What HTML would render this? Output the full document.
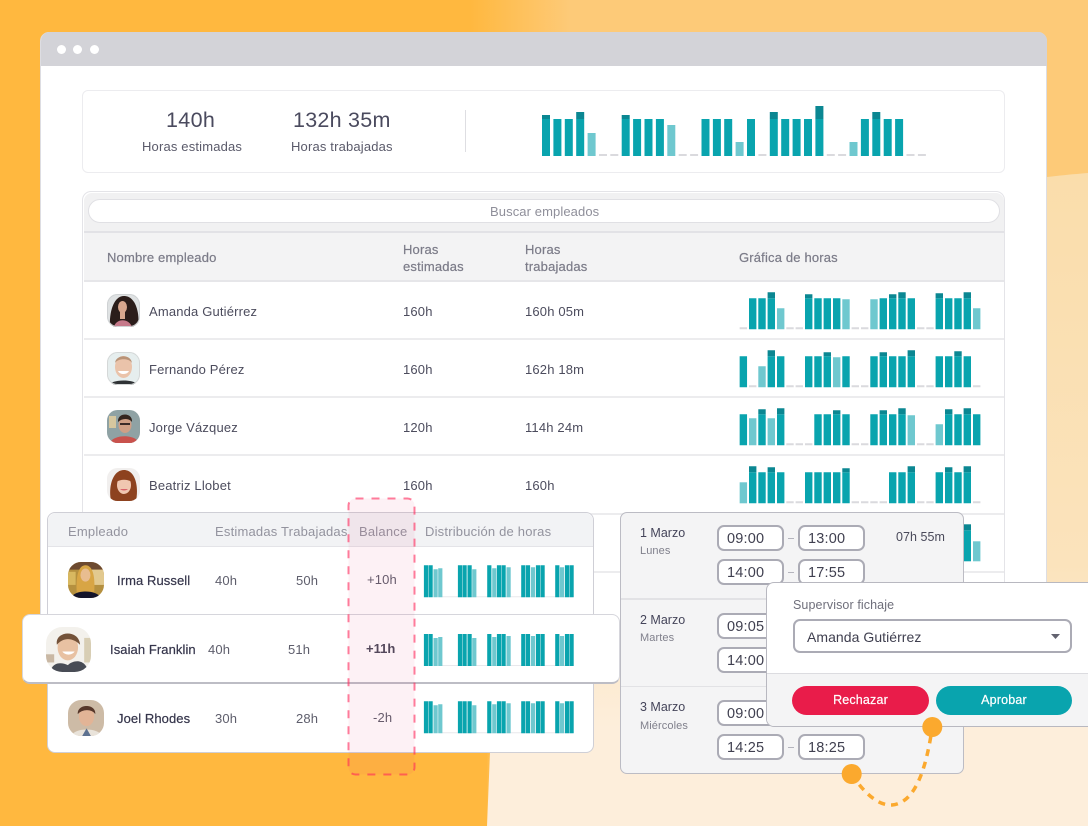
<!DOCTYPE html>
<html lang="es"><head><meta charset="utf-8"><title>Horas</title>
<style>
html,body{margin:0;padding:0}
body{width:1088px;height:826px;overflow:hidden;position:relative;background:#FFB83F;font-family:"Liberation Sans",sans-serif;font-size:13px;letter-spacing:.17px;color:#4c4c5d}
div,span,svg{position:absolute;box-sizing:border-box}
.t{white-space:nowrap;line-height:16px}
.h{color:#7b7b88;-webkit-text-stroke:.2px #7b7b88}
.g{color:#93939e;font-size:13px;letter-spacing:.2px}
.n{color:#34344a;font-size:13px;letter-spacing:.08px;-webkit-text-stroke:.2px #34344a}
.v{color:#5e5e6c}
.i{background:#fff;border:2px solid #ababb5;border-radius:7px;width:67px;height:26px;font-size:14.5px;line-height:24px;padding-left:8px;color:#3f3f4f;letter-spacing:.2px}
.d{width:6px;height:1.6px;background:#b4b4bd;left:788px}
.a{left:0;top:0}
</style></head><body>
<div style="left:0;top:0;width:1088px;height:826px;background:linear-gradient(90deg,#FFB83F 0,#FFB83F 470px,#FDCA78 570px,#FDCA78 100%)"></div>
<svg class="a" width="1088" height="826" viewBox="0 0 1088 826">
<defs><linearGradient id="bg" x1="0" y1="0" x2="0" y2="1"><stop offset="0" stop-color="#FADDAB"/><stop offset=".6" stop-color="#FBE3BC"/><stop offset=".85" stop-color="#FDEEDB"/><stop offset="1" stop-color="#FDEEDB"/></linearGradient></defs>
<path d="M0 320H490L487 826H0Z" fill="#FFB83F"/>
<path d="M1088 173C1050 176 1000 182 900 200C700 240 520 500 490 752L487 826H1088Z" fill="url(#bg)"/>
</svg>

<!-- window -->
<div style="left:40px;top:32px;width:1007px;height:620px;background:#fff;border:1px solid #dddde2;border-radius:9px 9px 0 0"></div>
<div style="left:41px;top:32px;width:1006px;height:34px;background:#D3D3D8;border-radius:9px 9px 0 0"></div>
<div style="left:57px;top:45px;width:9px;height:9px;border-radius:50%;background:#fff"></div>
<div style="left:73px;top:45px;width:9px;height:9px;border-radius:50%;background:#fff"></div>
<div style="left:90px;top:45px;width:9px;height:9px;border-radius:50%;background:#fff"></div>

<!-- stats -->
<div style="left:82px;top:90px;width:923px;height:83px;border:1.5px solid #ececef;border-radius:6px;background:#fff"></div>
<span class="t" style="left:166px;top:108px;font-size:21.500px;line-height:24px;color:#4a4a5e;letter-spacing:.35px">140h</span>
<span class="t" style="left:293px;top:108px;font-size:21.500px;line-height:24px;color:#4a4a5e;letter-spacing:.25px">132h 35m</span>
<span class="t" style="left:142px;top:138.500px;color:#5a5a6a">Horas estimadas</span>
<span class="t" style="left:291px;top:138.500px;color:#5a5a6a">Horas trabajadas</span>
<div style="left:465px;top:110px;width:1px;height:42px;background:#dedee2"></div>

<!-- table -->
<div style="left:82px;top:191px;width:923px;height:459px;border:1.5px solid #e4e4e8;border-bottom:0;border-radius:9px 9px 0 0;background:#fff"></div>
<div style="left:83.500px;top:192.500px;width:920px;height:38.500px;background:#f1f1f2;border-radius:8px 8px 0 0"></div>
<div style="left:88px;top:199px;width:912px;height:24px;background:#fff;border:1px solid #e0e0e4;border-radius:12px"></div>
<span class="t" style="left:490px;top:204px;color:#8f8f9a;font-size:13px;letter-spacing:.1px">Buscar empleados</span>
<div style="left:83.500px;top:231px;width:920px;height:51px;background:#f3f3f4;border-top:2px solid #e2e2e6;border-bottom:2px solid #e6e6e9"></div>
<span class="t h" style="left:107px;top:249.500px">Nombre empleado</span>
<span class="t h" style="left:403px;top:241px;line-height:17px">Horas<br>estimadas</span>
<span class="t h" style="left:525px;top:241px;line-height:17px">Horas<br>trabajadas</span>
<span class="t h" style="left:739px;top:249.500px">Gráfica de horas</span>
<div style="left:83.500px;top:338px;width:920px;height:2px;background:#ececee"></div>
<div style="left:83.500px;top:396px;width:920px;height:2px;background:#ececee"></div>
<div style="left:83.500px;top:454px;width:920px;height:2px;background:#ececee"></div>
<div style="left:83.500px;top:512.500px;width:920px;height:2px;background:#ececee"></div>
<div style="left:83.500px;top:570.500px;width:920px;height:2px;background:#ececee"></div>

<span class="t" style="left:149px;top:303.500px">Amanda Gutiérrez</span><span class="t" style="left:403px;top:303.500px">160h</span><span class="t" style="left:525px;top:303.500px">160h 05m</span>
<span class="t" style="left:149px;top:361.500px">Fernando Pérez</span><span class="t" style="left:403px;top:361.500px">160h</span><span class="t" style="left:525px;top:361.500px">162h 18m</span>
<span class="t" style="left:149px;top:419.500px">Jorge Vázquez</span><span class="t" style="left:403px;top:419.500px">120h</span><span class="t" style="left:525px;top:419.500px">114h 24m</span>
<span class="t" style="left:149px;top:477.500px">Beatriz Llobet</span><span class="t" style="left:403px;top:477.500px">160h</span><span class="t" style="left:525px;top:477.500px">160h</span>

<!-- avatars table -->
<svg style="left:107px;top:294px" width="33" height="33" viewBox="0 0 33 33"><defs><clipPath id="c"><rect width="33" height="33" rx="10.500"/></clipPath></defs><g clip-path="url(#c)"><rect width="33" height="33" fill="#dfe2e3"/><path d="M3 33C2 20 6 2 17 2C29 2 33 20 31 33Z" fill="#2b1d1a"/><ellipse cx="15.500" cy="13" rx="4.500" ry="6" fill="#d8a78e"/><path d="M13 17H18V25H13Z" fill="#d8a78e"/><path d="M7 33C9 24 22 24 25 33Z" fill="#c6798a"/></g><rect x=".5" y=".5" width="32" height="32" rx="10" fill="none" stroke="#cfd2d4"/></svg>
<svg style="left:107px;top:352px" width="33" height="33" viewBox="0 0 33 33"><g clip-path="url(#c)"><rect width="33" height="33" fill="#e6eeee"/><ellipse cx="16.500" cy="15" rx="8.500" ry="11" fill="#eac3aa"/><path d="M8 11C9 2 24 2 25 11C22 6 11 6 8 11Z" fill="#b99377"/><path d="M11 19C13 23 20 23 22 19Z" fill="#fff"/><path d="M2 33C5 27 28 27 31 33Z" fill="#2f3235"/></g><rect x=".5" y=".5" width="32" height="32" rx="10" fill="none" stroke="#d5d8d8"/></svg>
<svg style="left:107px;top:410px" width="33" height="33" viewBox="0 0 33 33"><g clip-path="url(#c)"><rect width="33" height="33" fill="#8fa2a4"/><rect x="2" y="6" width="7" height="12" fill="#d6c79f"/><ellipse cx="18" cy="15" rx="6.500" ry="8" fill="#cf9f86"/><path d="M11 12C10 2 26 2 25 12C22 8 15 8 11 12Z" fill="#33251f"/><path d="M13 13H23V15H13Z" fill="#3a2a28"/><path d="M3 33C6 24 29 24 32 33Z" fill="#c9524d"/></g></svg>
<svg style="left:107px;top:468px" width="33" height="33" viewBox="0 0 33 33"><g clip-path="url(#c)"><rect width="33" height="33" fill="#f1efee"/><path d="M4 33C1 18 6 2 17 2C28 2 32 18 29 33Z" fill="#8d421f"/><ellipse cx="17" cy="17" rx="7" ry="9" fill="#f0c7b1"/><path d="M9 14C9 5 25 5 25 14C20 11 14 11 9 14Z" fill="#8d421f"/><path d="M13 21C15 23 19 23 21 21Z" fill="#d8626a"/></g></svg>

<!-- charts in table -->
<svg class="a" width="1088" height="826" viewBox="0 0 1088 826" fill="none">
<g transform="translate(546 156)" stroke-width="8">
<path stroke="#09A4AE" d="M0 0V-37M11.4 0V-37M22.8 0V-37M34.2 0V-37M79.7 0V-37M91.1 0V-37M102.5 0V-37M113.9 0V-37M159.5 0V-37M170.9 0V-37M182.2 0V-37M205 0V-37M227.8 0V-37M239.2 0V-37M250.6 0V-37M262 0V-37M273.4 0V-37M318.9 0V-37M330.3 0V-37M341.7 0V-37M353.1 0V-37"/>
<path stroke="#0B8792" d="M0 -37V-41M34.2 -37V-44M79.7 -37V-41M227.8 -37V-44M273.4 -37V-50M330.3 -37V-44"/>
<path stroke="#6FC8CF" d="M45.6 0V-23M125.3 0V-31M193.6 0V-14M307.5 0V-14"/>
<path stroke="#DADADE" d="M57 0V-2M68.3 0V-2M136.7 0V-2M148.1 0V-2M216.4 0V-2M284.8 0V-2M296.1 0V-2M364.5 0V-2M375.9 0V-2"/>
</g>
<g transform="translate(739.7 329.3)" stroke-width="7.4">
<path stroke="#09A4AE" d="M13 0V-31M22.3 0V-31M31.6 0V-31M69 0V-31M78.3 0V-31M87.6 0V-31M97 0V-31M143.6 0V-31M153 0V-31M162.3 0V-31M171.6 0V-31M199.6 0V-31M209 0V-31M218.3 0V-31M227.6 0V-31"/>
<path stroke="#0B8792" d="M31.6 -31V-37M69 -31V-35M153 -31V-35M162.3 -31V-37M199.6 -31V-36M227.6 -31V-37"/>
<path stroke="#6FC8CF" d="M41 0V-21M106.3 0V-30M134.3 0V-30M237 0V-21"/>
<path stroke="#DADADE" d="M3.65 0V-2M50.3 0V-2M59.6 0V-2M115.6 0V-2M125 0V-2M181 0V-2M190.3 0V-2"/>
</g>
<g transform="translate(739.7 387.3)" stroke-width="7.4">
<path stroke="#09A4AE" d="M3.65 0V-31M31.6 0V-31M41 0V-31M69 0V-31M78.3 0V-31M87.6 0V-31M106.3 0V-31M134.3 0V-31M143.6 0V-31M153 0V-31M162.3 0V-31M171.6 0V-31M199.6 0V-31M209 0V-31M218.3 0V-31M227.6 0V-31"/>
<path stroke="#0B8792" d="M31.6 -31V-37M87.6 -31V-35M143.6 -31V-35M171.6 -31V-37M218.3 -31V-36"/>
<path stroke="#6FC8CF" d="M22.3 0V-21M97 0V-30"/>
<path stroke="#DADADE" d="M13 0V-2M50.3 0V-2M59.6 0V-2M115.6 0V-2M125 0V-2M181 0V-2M190.3 0V-2M237 0V-2"/>
</g>
<g transform="translate(739.7 445.3)" stroke-width="7.4">
<path stroke="#09A4AE" d="M3.65 0V-31M22.3 0V-31M41 0V-31M78.3 0V-31M87.6 0V-31M97 0V-31M106.3 0V-31M134.3 0V-31M143.6 0V-31M153 0V-31M162.3 0V-31M209 0V-31M218.3 0V-31M227.6 0V-31M237 0V-31"/>
<path stroke="#0B8792" d="M22.3 -31V-36M41 -31V-37M97 -31V-35M143.6 -31V-35M162.3 -31V-37M209 -31V-36M227.6 -31V-37"/>
<path stroke="#6FC8CF" d="M13 0V-27M31.6 0V-27M171.6 0V-30M199.6 0V-21"/>
<path stroke="#DADADE" d="M50.3 0V-2M59.6 0V-2M69 0V-2M115.6 0V-2M125 0V-2M181 0V-2M190.3 0V-2"/>
</g>
<g transform="translate(739.7 503.3)" stroke-width="7.4">
<path stroke="#09A4AE" d="M13 0V-31M22.3 0V-31M31.6 0V-31M41 0V-31M69 0V-31M78.3 0V-31M87.6 0V-31M97 0V-31M106.3 0V-31M153 0V-31M162.3 0V-31M171.6 0V-31M199.6 0V-31M209 0V-31M218.3 0V-31M227.6 0V-31"/>
<path stroke="#0B8792" d="M13 -31V-37M31.6 -31V-36M106.3 -31V-35M171.6 -31V-37M209 -31V-36M227.6 -31V-37"/>
<path stroke="#6FC8CF" d="M3.65 0V-21"/>
<path stroke="#DADADE" d="M50.3 0V-2M59.6 0V-2M115.6 0V-2M125 0V-2M134.3 0V-2M143.6 0V-2M181 0V-2M190.3 0V-2M237 0V-2"/>
</g>
<g transform="translate(739.7 561.3)" stroke-width="7.4">
<path stroke="#09A4AE" d="M227.6 0V-31"/><path stroke="#0B8792" d="M227.6 -31V-37"/><path stroke="#6FC8CF" d="M237 0V-20"/>
</g>
</svg>

<!-- employee panel -->
<div style="left:47px;top:512px;width:547px;height:241px;background:#fff;border:1px solid #cfcfd6;border-radius:8px"></div>
<div style="left:48px;top:513px;width:545px;height:34px;background:#f2f3f5;border-bottom:1px solid #e4e4e8;border-radius:8px 8px 0 0"></div>
<span class="t g" style="left:68px;top:523.500px">Empleado</span>
<span class="t g" style="left:215px;top:523.500px">Estimadas</span>
<span class="t g" style="left:281px;top:523.500px">Trabajadas</span>
<span class="t g" style="left:359px;top:523.500px">Balance</span>
<span class="t g" style="left:425px;top:523.500px">Distribución de horas</span>
<span class="t n" style="left:117px;top:572.500px">Irma Russell</span><span class="t v" style="left:215px;top:572.500px">40h</span><span class="t v" style="left:296px;top:572.500px">50h</span><span class="t v" style="left:367px;top:571.500px">+10h</span>
<span class="t n" style="left:117px;top:710.500px">Joel Rhodes</span><span class="t v" style="left:215px;top:710.500px">30h</span><span class="t v" style="left:296px;top:710.500px">28h</span><span class="t v" style="left:373px;top:709.500px">-2h</span>
<svg style="left:68px;top:562px" width="36" height="36" viewBox="0 0 33 33"><defs><clipPath id="c2"><rect width="33" height="33" rx="12"/></clipPath></defs><g clip-path="url(#c2)"><rect width="33" height="33" fill="#b5903f"/><rect x="0" y="0" width="33" height="7" fill="#6d4a30"/><rect x="22" y="7" width="11" height="14" fill="#e2c98f"/><rect x="0" y="9" width="7" height="12" fill="#d8b860"/><path d="M8 28C7 12 10 3 16 3C23 3 25 14 24 28Z" fill="#d8a544"/><ellipse cx="16" cy="12" rx="4.600" ry="6" fill="#e8bd90"/><path d="M3 33C5 25 27 25 30 33Z" fill="#14142a"/></g></svg>
<svg style="left:68px;top:700px" width="36" height="36" viewBox="0 0 33 33"><g clip-path="url(#c2)"><rect width="33" height="33" fill="#cdbba6"/><ellipse cx="17" cy="15" rx="7" ry="9" fill="#e2b496"/><path d="M9 13C8 3 26 3 25 13C22 8 13 8 9 13Z" fill="#56372a"/><path d="M3 33C6 25 28 25 31 33Z" fill="#e9e3da"/><path d="M13 33L17 26L21 33Z" fill="#5d7190"/></g></svg>

<!-- highlighted row -->
<div style="left:22px;top:614px;width:598px;height:70px;background:#fff;border:1px solid #d6d6dc;border-bottom:2px solid #bdbdc5;border-radius:8px"></div>
<svg style="left:46px;top:627px" width="45" height="45" viewBox="0 0 33 33"><defs><clipPath id="c3"><rect width="33" height="33" rx="12"/></clipPath></defs><g clip-path="url(#c3)"><rect width="33" height="33" fill="#f3f1ec"/><rect x="28" y="8" width="5" height="18" fill="#d8ceb4"/><rect x="0" y="20" width="6" height="6" fill="#c9b8a4"/><path d="M3 33C5 25 12 26 16 28C20 24 29 23 31 33Z" fill="#484c55"/><ellipse cx="16" cy="15" rx="7.500" ry="9.500" fill="#e8c1a2"/><path d="M8 13C6 3 24 1 25 13C20 8 13 7 8 13Z" fill="#735239"/><path d="M12 18C14 21 19 21 21 18Z" fill="#fff"/></g></svg>
<span class="t n" style="left:110px;top:641.500px">Isaiah Franklin</span><span class="t v" style="left:208px;top:641.500px">40h</span><span class="t v" style="left:288px;top:641.500px">51h</span><span class="t" style="left:366px;top:640.500px;font-weight:bold;color:#4a4a5a;letter-spacing:0">+11h</span>

<!-- mini charts -->
<svg class="a" width="1088" height="826" viewBox="0 0 1088 826" fill="none">
<defs><g id="m" stroke-width="4.200">
<path stroke="#e8e8ec" stroke-width="1" d="M442 -.5H573"/>
<path stroke="#09A4AE" d="M426 0V-32M430.600 0V-32M460 0V-32M464.600 0V-32M469.600 0V-32M489.300 0V-32M499 0V-32M503.600 0V-32M523.300 0V-32M528 0V-32M538 0V-32M542.600 0V-32M557.300 0V-32M567 0V-32M571.600 0V-32"/>
<path stroke="#6FC8CF" d="M435.600 0V-28M440.300 0V-29M474.300 0V-28M494.300 0V-29M508.600 0V-30M533 0V-30M562 0V-30"/>
</g></defs>
<use href="#m" y="597.300"/><use href="#m" y="666"/><use href="#m" y="733.300"/>
</svg>

<!-- schedule panel -->
<div style="left:620px;top:512px;width:344px;height:262px;background:#f4f4f5;border:1.5px solid #bcbcc4;border-radius:7px"></div>
<div style="left:621px;top:598px;width:342px;height:1.5px;background:#e2e2e5"></div>
<div style="left:621px;top:685.500px;width:342px;height:1.5px;background:#e2e2e5"></div>
<span class="t" style="left:640px;top:525px;font-size:12.500px;color:#45455a;letter-spacing:0">1 Marzo</span><span class="t" style="left:640px;top:542.500px;font-size:11px;color:#80808c;letter-spacing:.1px">Lunes</span>
<span class="t" style="left:640px;top:612px;font-size:12.500px;color:#45455a;letter-spacing:0">2 Marzo</span><span class="t" style="left:640px;top:630px;font-size:11px;color:#80808c;letter-spacing:.1px">Martes</span>
<span class="t" style="left:640px;top:699px;font-size:12.500px;color:#45455a;letter-spacing:0">3 Marzo</span><span class="t" style="left:640px;top:717.500px;font-size:11px;color:#80808c;letter-spacing:.1px">Miércoles</span>
<span class="t" style="left:896px;top:528.500px;font-size:12.500px;color:#4a4a5a;letter-spacing:.05px">07h 55m</span>
<div class="i" style="left:717px;top:525px">09:00</div><div class="d" style="top:537.500px"></div><div class="i" style="left:798px;top:525px">13:00</div>
<div class="i" style="left:717px;top:559px">14:00</div><div class="d" style="top:571.500px"></div><div class="i" style="left:798px;top:559px">17:55</div>
<div class="i" style="left:717px;top:613px">09:05</div><div class="i" style="left:717px;top:647px">14:00</div>
<div class="i" style="left:717px;top:700px">09:00</div>
<div class="i" style="left:717px;top:734px">14:25</div><div class="d" style="top:746.500px"></div><div class="i" style="left:798px;top:734px">18:25</div>

<!-- supervisor popover -->
<div style="left:766px;top:582px;width:330px;height:145px;background:#fff;border:1.500px solid #b8b8c0;border-radius:8px 0 0 8px;overflow:hidden">
<div style="left:0;top:90px;width:330px;height:55px;background:#f4f4f5;border-top:1.500px solid #dcdce0"></div></div>
<span class="t" style="left:793px;top:597px;font-size:12.500px;color:#6f6f7b;letter-spacing:.1px">Supervisor fichaje</span>
<div style="left:793px;top:619px;width:279px;height:34px;background:#fff;border:2px solid #ababb5;border-radius:7px"></div>
<span class="t" style="left:807px;top:628.500px;font-size:14px;color:#3f3f4f;letter-spacing:.05px">Amanda Gutiérrez</span>
<svg style="left:1050px;top:633px" width="11" height="7" viewBox="0 0 11 7"><path d="M1 1H10L5.500 6Z" fill="#62626f"/></svg>
<div style="left:792px;top:686px;width:137px;height:29px;background:#E91C4A;border-radius:15px;color:#fff;text-align:center;line-height:28px;font-size:12.500px;-webkit-text-stroke:.2px #fff">Rechazar</div>
<div style="left:936px;top:686px;width:136px;height:29px;background:#09A4AE;border-radius:15px;color:#fff;text-align:center;line-height:28px;font-size:12.500px;-webkit-text-stroke:.2px #fff">Aprobar</div>

<!-- overlays -->
<svg class="a" width="1088" height="826" viewBox="0 0 1088 826" fill="none">
<rect x="348.500" y="498.500" width="66" height="276" rx="7" fill="rgb(225,60,110)" fill-opacity=".07" stroke="rgb(255,40,90)" stroke-opacity=".6" stroke-width="2" stroke-dasharray="8 8"/>
<path d="M851.700 774C865 795 880 806 892 805C915 803 926 770 932.300 727" stroke="#FBA92E" stroke-width="3.500" stroke-dasharray="7 6"/>
<circle cx="932.300" cy="727" r="10" fill="#FBA92E"/><circle cx="851.700" cy="774" r="10" fill="#FBA92E"/>
</svg>
</body></html>
